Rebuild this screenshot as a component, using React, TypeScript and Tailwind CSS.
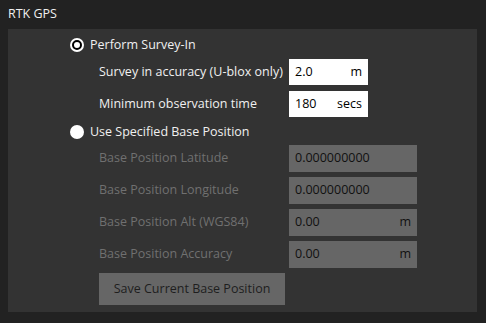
import React from "react";

const font = { fontFamily: '"Open Sans", "Noto Sans", sans-serif' };

function Radio({ checked, label }: { checked?: boolean; label: string }) {
  return (
    <div className="flex h-[20px] items-center pl-[62px]">
      <div className="flex h-[14px] w-[14px] items-center justify-center rounded-full bg-white">
        {checked && <div className="h-[10px] w-[10px] rounded-full border-[2.5px] border-black bg-white" />}
      </div>
      <span className="ml-[6px] text-[12.5px] text-[#f0f0f0]">{label}</span>
    </div>
  );
}

function EditRow({ label, value, unit }: { label: string; value: string; unit: string }) {
  return (
    <div className="flex h-[26px] items-center pl-[91px]">
      <span className="w-[190px] whitespace-nowrap text-[12.5px] text-[#f0f0f0]">{label}</span>
      <div className="flex h-[26px] w-[79px] items-center justify-between bg-white px-[6px] text-[12.5px] text-black">
        <span>{value}</span>
        <span>{unit}</span>
      </div>
    </div>
  );
}

function DisabledRow({ label, value, unit }: { label: string; value: string; unit?: string }) {
  return (
    <div className="flex h-[27px] items-center pl-[91px]">
      <span className="w-[190px] whitespace-nowrap text-[12.5px] text-[#707070]">{label}</span>
      <div className="flex h-[27px] w-[128px] items-center justify-between bg-[#666666] px-[6px] text-[12.5px] text-[#111111]">
        <span>{value}</span>
        {unit && <span>{unit}</span>}
      </div>
    </div>
  );
}

export default function App() {
  return (
    <div className="h-[323px] w-[486px] bg-[#222222] px-[8px]" style={font}>
      <div className="flex h-[29px] items-center text-[12.5px] text-[#f0f0f0]">RTK GPS</div>
      <div className="flex h-[283px] w-[469px] flex-col bg-[#333333] pt-[6px]">
        <Radio checked label="Perform Survey-In" />
        <div className="mt-[4px]">
          <EditRow label="Survey in accuracy (U-blox only)" value="2.0" unit="m" />
        </div>
        <div className="mt-[6px]">
          <EditRow label="Minimum observation time" value="180" unit="secs" />
        </div>
        <div className="mt-[5px]">
          <Radio label="Use Specified Base Position" />
        </div>
        <div className="mt-[3px] flex flex-col gap-[5px]">
          <DisabledRow label="Base Position Latitude" value="0.000000000" />
          <DisabledRow label="Base Position Longitude" value="0.000000000" />
          <DisabledRow label="Base Position Alt (WGS84)" value="0.00" unit="m" />
          <DisabledRow label="Base Position Accuracy" value="0.00" unit="m" />
        </div>
        <div className="mt-[5px] pl-[91px]">
          <button className="flex h-[32px] w-[186px] items-center justify-center bg-[#666666] text-[12.5px] text-[#1e1e1e]">
            Save Current Base Position
          </button>
        </div>
      </div>
    </div>
  );
}
